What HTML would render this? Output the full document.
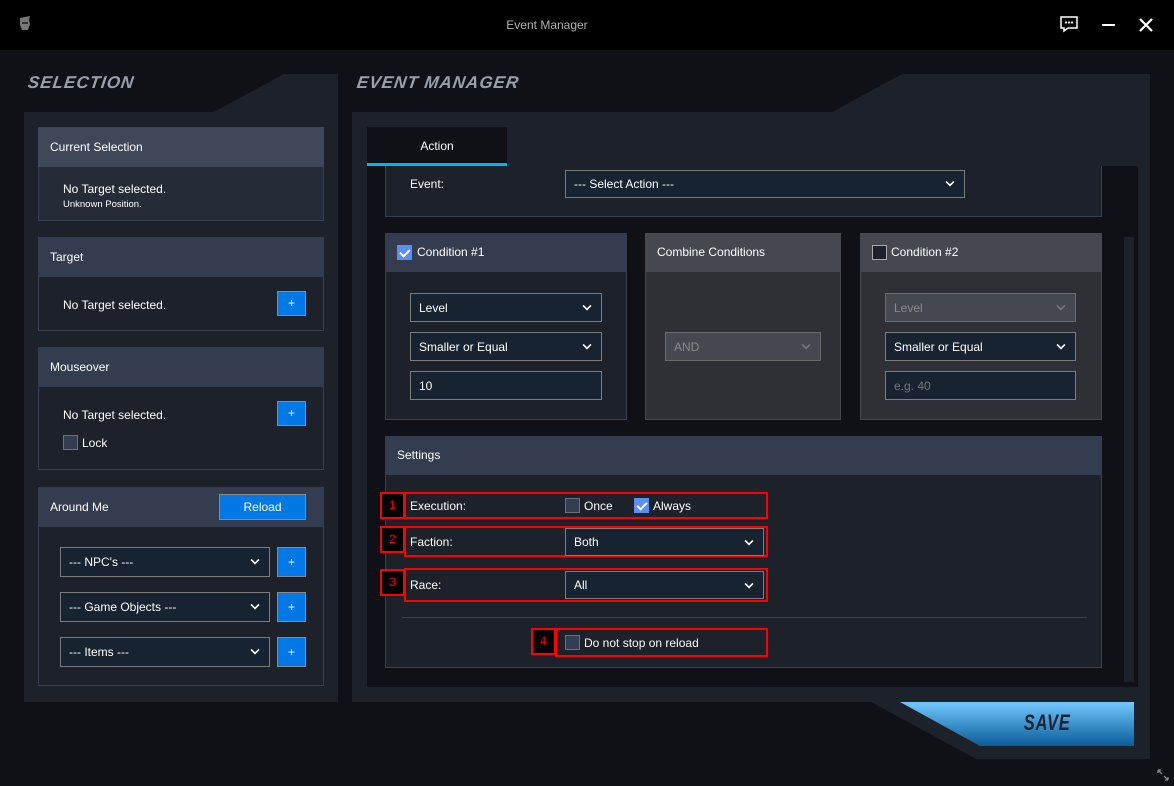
<!DOCTYPE html>
<html><head><meta charset="utf-8"><style>
*{box-sizing:border-box;margin:0;padding:0}
body{width:1174px;height:786px;background:#0f1116;font-family:"Liberation Sans",sans-serif;font-size:12px;color:#fff;position:relative;overflow:hidden}
.a{position:absolute}
.hdr{background:#343d4f;padding-left:12px;line-height:40px;font-size:12px}
.body{background:#1c212a;border:1px solid #394050;border-top:none}
.sel{position:absolute;background:#172330;border:1px solid #7d7d7d;padding-left:8px;font-size:12px;line-height:28px;color:#fff}
.sel .ch{position:absolute;right:10px;width:8px;height:8px;border-right:2px solid #fff;border-bottom:2px solid #fff;transform:rotate(45deg) scale(.8);top:8px}
.btn{position:absolute;background:#0078e6;border:1px solid #8a8a8a;text-align:center;color:#fff}
.cb{position:absolute;width:15px;height:15px;background:#343d4f;border:1px solid #6b7180}
.cbk{position:absolute;width:15px;height:15px;background:#5a8ef0}
.cbk:after{content:"";position:absolute;left:5px;top:2px;width:4px;height:8px;border-right:2px solid #fff;border-bottom:2px solid #fff;transform:rotate(45deg)}
.rb{position:absolute;border:2px solid #f00}
.num{position:absolute;background:#000;border:2px solid #f00;color:#f00;text-align:center;font-size:12px}
.ttl{position:absolute;font-weight:bold;font-style:italic;font-size:17px;color:#9aa0ab;letter-spacing:1px;transform:skewX(-8deg)}
</style></head><body>
<div class="a" style="left:0;top:0;width:1174px;height:50px;background:#000"></div>
<svg class="a" style="left:17px;top:15px" width="17" height="17" viewBox="0 0 17 17"><path d="M3 3 L13 1 L12 5 L13 9 L11 15 L5 15 L3 10 Z" fill="#777"/><path d="M5 7h6v2H5z" fill="#333"/></svg>
<div class="a" style="left:0;width:1094px;top:18px;text-align:center;color:#b0b0b0;font-size:12px">Event Manager</div>
<svg class="a" style="left:1060px;top:16px" width="18" height="17" viewBox="0 0 18 17"><path d="M1 1h16v11H8l-4 3v-3H1z" fill="none" stroke="#fff" stroke-width="1.5"/><circle cx="6" cy="6.5" r="1.1" fill="#fff"/><circle cx="9" cy="6.5" r="1.1" fill="#fff"/><circle cx="12" cy="6.5" r="1.1" fill="#fff"/></svg>
<div class="a" style="left:1102px;top:24px;width:13px;height:2px;background:#fff"></div>
<svg class="a" style="left:1139px;top:18px" width="14" height="14"><path d="M1 1L13 13M13 1L1 13" stroke="#fff" stroke-width="2.2"/></svg>

<svg class="a" style="left:0;top:0" width="1174" height="786">
<polygon points="24,112 214,112 284,74 338,74 338,702 24,702" fill="#1c212a"/>
<polygon points="352,112 832,112 902,74 1150,74 1150,759 976,759 871,702 352,702" fill="#1c212a"/>
<defs><linearGradient id="g" x1="0" y1="0" x2="0" y2="1"><stop offset="0" stop-color="#72c8ff"/><stop offset="1" stop-color="#0a5d98"/></linearGradient></defs>
<polygon points="900,702 1134,702 1134,746 980,746" fill="url(#g)"/>
</svg>
<div class="ttl" style="left:28px;top:73px">SELECTION</div>
<div class="ttl" style="left:357px;top:73px">EVENT MANAGER</div>
<div class="a" style="left:1016px;top:710px;font-size:22px;font-weight:bold;font-style:italic;color:#1b2230;transform:scaleX(.75);letter-spacing:1px">SAVE</div>
<svg class="a" style="left:1157px;top:769px" width="12" height="12"><path d="M1 1l4 4M1 1h3M1 1v3M11 11l-4-4M11 11H8M11 11V8" stroke="#888" stroke-width="1.3"/></svg>

<div class="a hdr" style="left:38px;top:127px;width:286px;height:40px;background:#3e4859">Current Selection</div>
<div class="a body" style="left:38px;top:167px;width:286px;height:54px;background:#262c37"></div>
<div class="a" style="left:63px;top:182px">No Target selected.</div>
<div class="a" style="left:63px;top:199px;font-size:9.5px">Unknown Position.</div>

<div class="a hdr" style="left:38px;top:237px;width:286px;height:40px">Target</div>
<div class="a body" style="left:38px;top:277px;width:286px;height:54px"></div>
<div class="a" style="left:63px;top:298px">No Target selected.</div>
<div class="btn" style="left:277px;top:291px;width:29px;height:25px;line-height:23px">+</div>

<div class="a hdr" style="left:38px;top:347px;width:286px;height:40px">Mouseover</div>
<div class="a body" style="left:38px;top:387px;width:286px;height:83px"></div>
<div class="a" style="left:63px;top:408px">No Target selected.</div>
<div class="btn" style="left:277px;top:401px;width:29px;height:25px;line-height:23px">+</div>
<div class="cb" style="left:63px;top:435px"></div><div class="a" style="left:82px;top:436px">Lock</div>

<div class="a hdr" style="left:38px;top:487px;width:286px;height:40px">Around Me</div>
<div class="btn" style="left:219px;top:494px;width:87px;height:26px;line-height:24px">Reload</div>
<div class="a body" style="left:38px;top:527px;width:286px;height:159px"></div>
<div class="sel" style="left:60px;top:547px;width:210px;height:30px">--- NPC's ---<span class="ch"></span></div>
<div class="btn" style="left:277px;top:547px;width:29px;height:30px;line-height:28px">+</div>
<div class="sel" style="left:60px;top:592px;width:210px;height:30px">--- Game Objects ---<span class="ch"></span></div>
<div class="btn" style="left:277px;top:592px;width:29px;height:30px;line-height:28px">+</div>
<div class="sel" style="left:60px;top:637px;width:210px;height:30px">--- Items ---<span class="ch"></span></div>
<div class="btn" style="left:277px;top:637px;width:29px;height:30px;line-height:28px">+</div>

<div class="a" style="left:367px;top:127px;width:140px;height:39px;background:#0f1116;text-align:center;line-height:38px">Action</div>
<div class="a" style="left:367px;top:163px;width:140px;height:3px;background:#00b4f0"></div>
<div class="a" style="left:367px;top:166px;width:771px;height:521px;background:#0f1116;overflow:hidden">
 <div class="a" style="left:757px;top:71px;width:10px;height:445px;background:#1c212a"></div>
 <div class="a" style="left:18px;top:-5px;width:717px;height:56px;background:#1c212a;border:1px solid #394050"></div>
 <div class="a" style="left:43px;top:11px">Event:</div>
 <div class="sel" style="left:198px;top:4px;width:400px;height:28px;line-height:26px">--- Select Action ---<span class="ch" style="top:7px"></span></div>
</div>

<div class="a hdr" style="left:385px;top:233px;width:242px;height:39px;padding-left:32px;line-height:39px">Condition #1</div>
<div class="cbk" style="left:397px;top:245px"></div>
<div class="a body" style="left:385px;top:272px;width:242px;height:148px"></div>
<div class="sel" style="left:410px;top:293px;width:192px;height:29px">Level<span class="ch"></span></div>
<div class="sel" style="left:410px;top:332px;width:192px;height:29px">Smaller or Equal<span class="ch"></span></div>
<div class="sel" style="left:410px;top:371px;width:192px;height:29px">10</div>

<div class="a hdr" style="left:645px;top:233px;width:196px;height:39px;background:#45494f;line-height:39px">Combine Conditions</div>
<div class="a body" style="left:645px;top:272px;width:196px;height:148px;background:#2e3035;border-color:#45494f"></div>
<div class="sel" style="left:665px;top:332px;width:156px;height:29px;background:#45494f;border-color:#6b6b6b;color:#8a8a8a">AND<span class="ch" style="border-color:#777"></span></div>

<div class="a hdr" style="left:860px;top:233px;width:242px;height:39px;background:#45494f;padding-left:31px;line-height:39px">Condition #2</div>
<div class="cb" style="left:872px;top:245px;background:#1c212a;border-color:#aaa"></div>
<div class="a body" style="left:860px;top:272px;width:242px;height:148px;background:#2e3035;border-color:#45494f"></div>
<div class="sel" style="left:885px;top:293px;width:191px;height:29px;background:#45494f;border-color:#6b6b6b;color:#8a8a8a">Level<span class="ch" style="border-color:#777"></span></div>
<div class="sel" style="left:885px;top:332px;width:191px;height:29px">Smaller or Equal<span class="ch"></span></div>
<div class="sel" style="left:885px;top:371px;width:191px;height:29px;color:#777">e.g. 40</div>

<div class="a hdr" style="left:385px;top:436px;width:717px;height:39px;line-height:39px">Settings</div>
<div class="a body" style="left:385px;top:475px;width:717px;height:193px"></div>
<div class="a" style="left:402px;top:617px;width:685px;height:1px;background:#394050"></div>

<div class="num" style="left:380px;top:492px;width:25px;height:27px;line-height:23px">1</div>
<div class="rb" style="left:404px;top:492px;width:364px;height:27px"></div>
<div class="a" style="left:410px;top:499px">Execution:</div>
<div class="cb" style="left:565px;top:498px"></div><div class="a" style="left:584px;top:499px">Once</div>
<div class="cbk" style="left:634px;top:498px"></div><div class="a" style="left:653px;top:499px">Always</div>

<div class="num" style="left:380px;top:526px;width:25px;height:27px;line-height:23px">2</div>
<div class="rb" style="left:404px;top:526px;width:364px;height:31px"></div>
<div class="a" style="left:410px;top:535px">Faction:</div>
<div class="sel" style="left:565px;top:528px;width:199px;height:28px;line-height:27px">Both<span class="ch"></span></div>

<div class="num" style="left:380px;top:569px;width:25px;height:27px;line-height:23px">3</div>
<div class="rb" style="left:404px;top:568px;width:364px;height:34px"></div>
<div class="a" style="left:410px;top:578px">Race:</div>
<div class="sel" style="left:565px;top:571px;width:199px;height:28px;line-height:27px">All<span class="ch"></span></div>

<div class="num" style="left:531px;top:628px;width:25px;height:27px;line-height:23px">4</div>
<div class="rb" style="left:555px;top:628px;width:213px;height:29px"></div>
<div class="cb" style="left:565px;top:635px"></div><div class="a" style="left:584px;top:636px">Do not stop on reload</div>
</body></html>
